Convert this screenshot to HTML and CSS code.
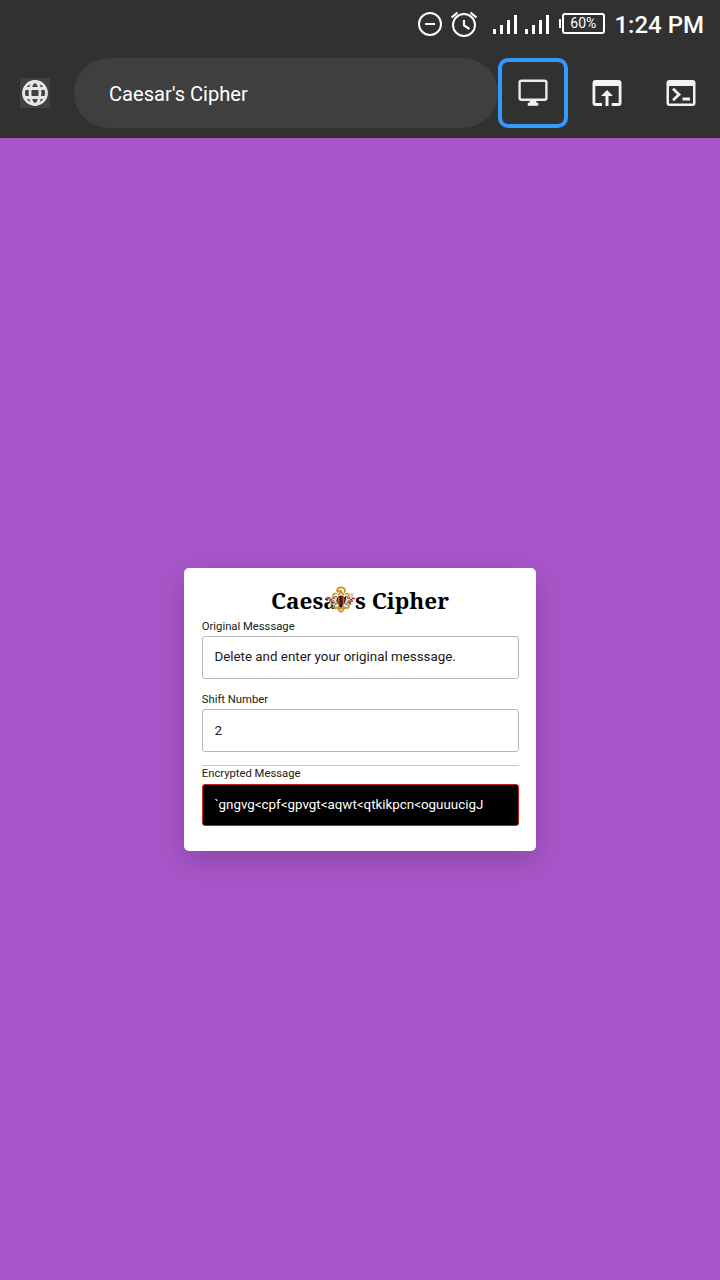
FILE: index.html
```html
<!DOCTYPE html>
<html lang="en">
<head>
<meta charset="utf-8">
<meta name="viewport" content="width=device-width">
<title>Caesar's Cipher</title>
<link rel="stylesheet" href="styles.css">
</head>
<body>
<div class="status">
  <svg class="status-icons" width="190" height="50" viewBox="414 0 190 50" fill="none" stroke="#fff" stroke-width="2">
    <circle cx="430" cy="24" r="11"/>
    <path d="M425 24h10"/>
    <circle cx="464" cy="25" r="11"/>
    <path d="M464 20v5.500l5.500 3.500M451.500 17.500l6-4.800M476.500 17.500l-6-4.800" stroke-width="2.200"/>
    <path d="M494.500 29v5M501.500 25v9M508.500 20v14M515.500 15v19M526.500 29v5M533.500 25v9M540.500 20v14M547.500 15v19" stroke-width="3"/>
    <path d="M560 19v9"/>
    <rect x="563" y="14" width="41" height="19" rx="2"/>
    <text class="battery" x="583.300" y="28" text-anchor="middle">60%</text>
  </svg>
  <span class="clock">1:24 PM</span>
</div>
<header class="toolbar">
  <span class="globe">
    <svg width="30" height="30" viewBox="0 0 30 30" fill="none" stroke="#e6e6e6" stroke-width="2.800">
      <circle cx="15" cy="15" r="11.500"/>
      <ellipse cx="15" cy="15" rx="5" ry="11.500"/>
      <path d="M4.500 10.500h21M4.500 19.500h21"/>
    </svg>
  </span>
  <div class="address">Caesar's Cipher</div>
  <button class="tool active" aria-label="Desktop view">
    <svg width="30" height="30" viewBox="0 0 30 30" fill="none" stroke="#ececec" stroke-width="2.400">
      <rect x="1.600" y="2.800" width="26.800" height="19" rx="2"/>
      <path d="M12 22h6v3h2v2.500h-10v-2.500h2z" fill="#f2f2f2" stroke-width="0.600"/>
    </svg>
  </button>
  <button class="tool" aria-label="Open in browser">
    <svg width="30" height="30" viewBox="0 0 30 30" fill="#f2f2f2">
      <path d="M3.500 2h23a3 3 0 0 1 3 3v20a3 3 0 0 1-3 3H19.700v-3H26.700V8H3.300v17H10v3H3.500a3 3 0 0 1-3-3V5a3 3 0 0 1 3-3z"/>
      <path d="M15 12l6 6h-4.500v10h-3V18H9z"/>
    </svg>
  </button>
  <button class="tool" aria-label="Console">
    <svg width="30" height="30" viewBox="0 0 30 30">
      <path d="M3.500 2h23a3 3 0 0 1 3 3v20a3 3 0 0 1-3 3h-23a3 3 0 0 1-3-3V5a3 3 0 0 1 3-3zM3 8v17.500h24V8z" fill="#f2f2f2" fill-rule="evenodd"/>
      <path d="M7 10.800l6 5.700-6 5.700M16.500 21h7.500" fill="none" stroke="#f2f2f2" stroke-width="2.800"/>
    </svg>
  </button>
</header>
<main class="page">
  <section class="card">
    <h1 class="title">
      <svg class="title-text" width="178" height="32" viewBox="0 0 178 32"><text x="0" y="23.500" textLength="178" lengthAdjust="spacingAndGlyphs">Caesar's Cipher</text></svg>
      <svg class="emblem" width="32" height="28" viewBox="-1 0 32 28" fill="none">
        <path d="M20 5h9v6h-9z" fill="#fff" fill-opacity="0.800"/>
        <path d="M0 12l10-2v10l-7-2 1-2zM30 12l-10-2v10l7-2-1-2z" fill="#d5dfce"/>
        <path d="M1 12.500h3M6 12h3M3 15h3M7 16.500h2M5 18h2M29 12.500h-3M24 12h-3M27 15h-3M23 16.500h-2M25 18h-2" stroke="#b2453e" stroke-width="1.500"/>
        <path d="M4 13.500h2M6 15h2M5 16.500h2M9 18h2M26 13.500h-2M24 15h-2M25 16.500h-2M21 18h-2M9 10.500h2M21 10.500h-2" stroke="#3f5648" stroke-width="1.200"/>
        <path d="M15 1.500c-4 0-5 3-3 5M15 1.500c4 0 5 3 3 5M12 5h4M11 8c-3-1-5 1-3 3M19 8c3-1 5 1 3 3M9 19c-4 1-1 5 2 2M21 19c4 1 1 5-2 2M12 21c0 3 1 4 3 5 2-1 3-2 3-5M12 9l3-3 3 3M12 20l3 3 3-3" stroke="#c79635" stroke-width="1.800"/>
        <ellipse cx="15" cy="14.500" rx="4.700" ry="5" fill="#79301c"/>
        <path d="M12.500 11v7M17.500 11v7" stroke="#bd6229"/>
        <path d="M15 10v10" stroke="#301515" stroke-width="1.500"/>
      </svg>
    </h1>
    <div class="label">Original Messsage</div>
    <div class="field">Delete and enter your original messsage.</div>
    <div class="label second">Shift Number</div>
    <div class="field shift">2</div>
    <div class="rule"></div>
    <div class="label encrypted">Encrypted Message</div>
    <div class="field output">`gngvg&lt;cpf&lt;gpvgt&lt;aqwt&lt;qtkikpcn&lt;oguuucigJ</div>
  </section>
</main>
</body>
</html>
```
FILE: styles.css
```css
* { box-sizing: border-box; }
body { margin: 0; width: 720px; height: 1280px; overflow: hidden; display: flex; flex-direction: column; background: #a856c9; font-family: Roboto, sans-serif; }
.status { height: 50px; display: flex; justify-content: flex-end; padding-right: 16px; background: #313131; color: #fff; }
.status-icons { flex: none; overflow: visible; margin-right: 10px; }
.battery { fill: #fff; stroke: none; font-size: 14px; }
.clock { font-size: 24px; font-weight: 500; line-height: 50px; white-space: nowrap; }
.toolbar { height: 88px; padding: 8px 0 10px 20px; display: flex; gap: 4px; align-items: center; background: #313131; }
.globe { width: 30px; height: 30px; margin-right: 20px; background: #414141; flex: none; }
.globe svg, .tool svg { display: block; }
.address { width: 424px; height: 70px; margin-right: -4px; flex: none; padding-left: 35px; border-radius: 35px; background: #3f3f3f; color: #fff; font-size: 20.1px; line-height: 72px; }
.tool { width: 70px; height: 70px; margin: 0; padding: 0; border: 4px solid transparent; border-radius: 10px; background: none; display: flex; align-items: center; justify-content: center; flex: none; }
.tool.active { border-color: #3399ff; }
.page { flex: 1; padding: 430px 184px 0; }
.card { width: 352px; height: 283px; padding: 17px 17.5px 0 17.8px; border-radius: 5px; background: #fff; box-shadow: 0 10px 28px rgba(70, 35, 90, .3); color: #202020; }
.title { position: relative; height: 33px; margin: 0; display: flex; justify-content: center; }
.title-text { display: block; overflow: visible; font-family: "Noto Serif", "DejaVu Serif Condensed", "DejaVu Serif", serif; font-size: 22.5px; font-weight: 700; fill: #000; }
.emblem { position: absolute; left: 123.5px; top: 1px; }
.label { height: 18px; font-size: 11.25px; line-height: 17px; }
.field { height: 43px; padding-left: 11.6px; border: 1px solid #b7b7b7; border-radius: 3px; font-size: 13.36px; line-height: 40px; color: #181818; white-space: nowrap; }
.second { margin-top: 12px; }
.shift { line-height: 42px; }
.rule { height: 1px; margin-top: 13px; background: #c8c8c8; }
.encrypted { height: 18px; line-height: 15px; }
.output { height: 42px; background: #000; border-color: #c51f1f; color: #fff; }
```
